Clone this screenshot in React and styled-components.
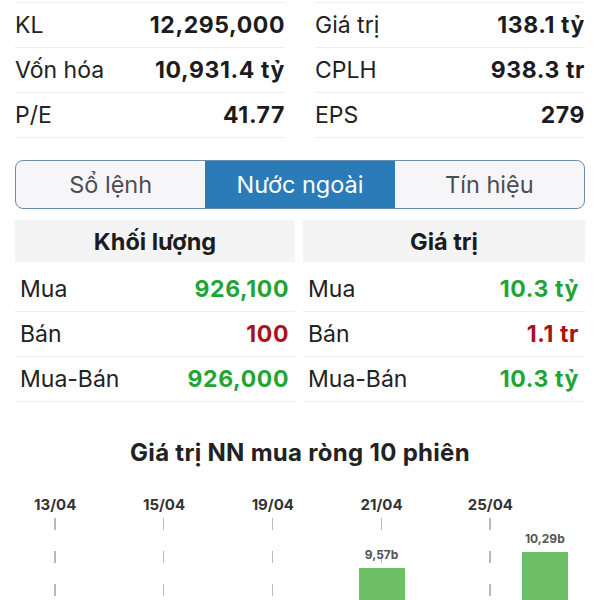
import React from 'react';
import styled, { createGlobalStyle } from 'styled-components';

const GlobalStyle = createGlobalStyle`
  * { box-sizing: border-box; }
  html, body {
    margin: 0;
    padding: 0;
    background: #ffffff;
    font-family: Inter, 'Noto Sans', 'Liberation Sans', sans-serif;
    color: #1c1c1e;
  }
  body {
    width: 600px;
    height: 600px;
    overflow: hidden;
  }
`;

const summary = [
  [
    { label: 'KL', value: '12,295,000' },
    { label: 'Vốn hóa', value: '10,931.4 tỷ' },
    { label: 'P/E', value: '41.77' },
  ],
  [
    { label: 'Giá trị', value: '138.1 tỷ' },
    { label: 'CPLH', value: '938.3 tr' },
    { label: 'EPS', value: '279' },
  ],
];

const tabs = ['Sổ lệnh', 'Nước ngoài', 'Tín hiệu'];

const foreign = [
  {
    title: 'Khối lượng',
    rows: [
      { label: 'Mua', value: '926,100', tone: 'up' },
      { label: 'Bán', value: '100', tone: 'down' },
      { label: 'Mua-Bán', value: '926,000', tone: 'up' },
    ],
  },
  {
    title: 'Giá trị',
    rows: [
      { label: 'Mua', value: '10.3 tỷ', tone: 'up' },
      { label: 'Bán', value: '1.1 tr', tone: 'down' },
      { label: 'Mua-Bán', value: '10.3 tỷ', tone: 'up' },
    ],
  },
];

const sessions = [
  { date: '13/04' },
  { date: '' },
  { date: '15/04' },
  { date: '' },
  { date: '19/04' },
  { date: '' },
  { date: '21/04', value: '9,57b', height: 77 },
  { date: '' },
  { date: '25/04' },
  { date: '', value: '10,29b', height: 93 },
];

const App = () => {
  return (
    <>
      <GlobalStyle />
      <Page>
        <Summary>
          {summary.map((column, colIdx) => (
            <SummaryColumn key={colIdx}>
              {column.map(item => (
                <SummaryRow key={item.label}>
                  <Label>{item.label}</Label>
                  <Value>{item.value}</Value>
                </SummaryRow>
              ))}
            </SummaryColumn>
          ))}
        </Summary>

        <Tabs>
          {tabs.map((tab, tabIdx) => (
            <Tab key={tab} active={tabIdx === 1}>
              {tab}
            </Tab>
          ))}
        </Tabs>

        <ForeignGrid>
          {foreign.map(table => (
            <ForeignTable key={table.title}>
              <TableHead>{table.title}</TableHead>
              {table.rows.map(row => (
                <TableRow key={row.label}>
                  <Label>{row.label}</Label>
                  <Value tone={row.tone}>{row.value}</Value>
                </TableRow>
              ))}
            </ForeignTable>
          ))}
        </ForeignGrid>

        <ChartTitle>Giá trị NN mua ròng 10 phiên</ChartTitle>
        <Chart>
          {sessions.map((session, idx) => (
            <Session key={idx}>
              <DateLabel>{session.date}</DateLabel>
              <Plot>
                {session.date && <GridLine />}
                {session.value && <BarValue>{session.value}</BarValue>}
                {session.height && (
                  <Bar style={{ height: `${session.height}px` }} />
                )}
              </Plot>
            </Session>
          ))}
        </Chart>
      </Page>
    </>
  );
};

export default App;

const Page = styled.div`
  width: 600px;
  height: 600px;
  padding: 2px 15px 0;
  overflow: hidden;
`;

const Summary = styled.div`
  display: grid;
  grid-template-columns: 1fr 1fr;
  column-gap: 30px;
`;

const SummaryColumn = styled.div`
  border-top: 1px solid #efeff1;
`;

const SummaryRow = styled.div`
  height: 45px;
  display: flex;
  justify-content: space-between;
  align-items: center;
  border-bottom: 1px solid #efeff1;
`;

const Label = styled.span`
  font-size: 23px;
  font-weight: 400;
  color: #222;
`;

const Value = styled.span`
  font-size: 23px;
  font-weight: 700;
  letter-spacing: 0.6px;
  color: ${({ tone }) =>
    tone === 'up' ? '#1fa534' : tone === 'down' ? '#a8121a' : '#1c1c1e'};
`;

const Tabs = styled.div`
  margin-top: 22px;
  height: 49px;
  display: grid;
  grid-template-columns: repeat(3, 1fr);
  border: 1.5px solid #6a8dab;
  border-radius: 8px;
  overflow: hidden;
  background: #f6f6f8;
`;

const Tab = styled.div`
  display: flex;
  justify-content: center;
  align-items: center;
  font-size: 23.5px;
  color: ${({ active }) => (active ? '#ffffff' : '#4c4c55')};
  background: ${({ active }) => (active ? '#2b7bb9' : 'transparent')};
`;

const ForeignGrid = styled.div`
  margin-top: 11px;
  display: grid;
  grid-template-columns: 280px 1fr;
  column-gap: 8px;
`;

const ForeignTable = styled.div`
  display: flex;
  flex-direction: column;
`;

const TableHead = styled.div`
  height: 42px;
  margin-bottom: 5px;
  display: flex;
  justify-content: center;
  align-items: center;
  background: #f4f4f5;
  font-size: 23.5px;
  font-weight: 700;
  color: #1c1c1e;
`;

const TableRow = styled.div`
  height: 45px;
  padding: 0 6px 0 5px;
  display: flex;
  justify-content: space-between;
  align-items: center;
  border-bottom: 1px solid #efeff1;
`;

const ChartTitle = styled.div`
  margin-top: 36px;
  height: 30px;
  line-height: 30px;
  text-align: center;
  font-size: 24px;
  font-weight: 700;
  letter-spacing: 0.3px;
  color: #222;
`;

const Chart = styled.div`
  margin: 27px -1px 0;
  padding: 0 14px;
  height: 150px;
  display: grid;
  grid-template-columns: repeat(10, 1fr);
`;

const Session = styled.div`
  display: flex;
  flex-direction: column;
  align-items: center;
`;

const DateLabel = styled.div`
  height: 20px;
  line-height: 20px;
  font-size: 15px;
  font-weight: 700;
  color: #333;
  white-space: nowrap;
`;

const Plot = styled.div`
  position: relative;
  flex: 1;
  width: 100%;
  display: flex;
  flex-direction: column;
  justify-content: flex-end;
  align-items: center;
`;

const GridLine = styled.div`
  position: absolute;
  top: 3px;
  bottom: 0;
  left: calc(50% - 1px);
  width: 1.5px;
  background: repeating-linear-gradient(
    to bottom,
    #b9b9bd 0,
    #b9b9bd 12px,
    transparent 12px,
    transparent 33px
  );
`;

const BarValue = styled.div`
  position: relative;
  margin-bottom: 6px;
  font-size: 12px;
  font-weight: 700;
  color: #555;
`;

const Bar = styled.div`
  position: relative;
  width: 46px;
  background: #6cbf65;
`;
